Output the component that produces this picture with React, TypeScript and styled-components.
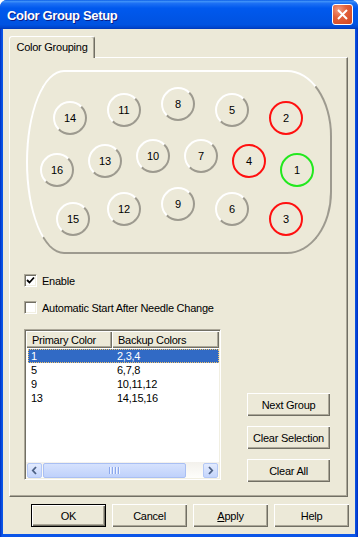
import React from "react";
import styled, { createGlobalStyle, css } from "styled-components";

const GlobalStyle = createGlobalStyle`
	html, body {
		margin: 0;
		padding: 0;
		background: #ffffff;
	}
	body {
		font-family: "Liberation Sans", Arial, sans-serif;
		font-size: 11px;
		letter-spacing: -0.25px;
		color: #000;
	}
`;

const Window = styled.div`
	width: 358px;
	height: 537px;
	display: flex;
	flex-direction: column;
	border-radius: 7px 7px 0 0;
	overflow: hidden;
	background: linear-gradient(to right, #0030c0 0, #0a55e8 2px, #0a55e8 355px, #0030c0 358px);
`;

const TitleBar = styled.div`
	height: 29px;
	flex: none;
	display: flex;
	align-items: center;
	justify-content: space-between;
	padding: 0 5px 0 7px;
	background: linear-gradient(
		to bottom,
		#0a5de6 0%,
		#3d90f8 5%,
		#1c70f4 12%,
		#0059ee 28%,
		#0055e6 60%,
		#0053e1 85%,
		#0047d0 94%,
		#0038b8 100%
	);
`;

const Title = styled.span`
	color: #fff;
	font-weight: bold;
	font-size: 13px;
	letter-spacing: -0.35px;
	text-shadow: 1px 1px #0c1c86;
	padding-top: 1px;
`;

const CloseButton = styled.div`
	width: 21px;
	height: 21px;
	box-sizing: border-box;
	border: 1px solid #fff;
	border-radius: 3px;
	display: flex;
	align-items: center;
	justify-content: center;
	background: radial-gradient(circle at 30% 25%, #f39b80 0%, #e2603a 40%, #cf4520 100%);
`;

const Body = styled.div`
	flex: 1;
	display: flex;
	flex-direction: column;
	margin: 0 3px 3px;
	padding: 7px 7px 7px 6px;
	background: #ece9d8;
`;

const TabStrip = styled.div`
	display: flex;
	position: relative;
	z-index: 1;
	margin-bottom: -1px;
`;

const Tab = styled.div`
	width: 86px;
	height: 22px;
	box-sizing: border-box;
	display: flex;
	align-items: center;
	justify-content: center;
	padding-bottom: 1px;
	background: #ece9d8;
	border-top: 1px solid #fff;
	border-left: 1px solid #fff;
	border-right: 1px solid #716f64;
	border-radius: 3px 3px 0 0;
	box-shadow: inset -1px 0 #aca899;
`;

const Panel = styled.div`
	height: 440px;
	box-sizing: border-box;
	display: flex;
	flex-direction: column;
	padding: 12px 17px 0 14px;
	border-top: 1px solid #fff;
	border-left: 1px solid #fff;
	border-right: 1px solid #716f64;
	border-bottom: 1px solid #716f64;
	box-shadow: inset -1px -1px #aca899;
`;

const Board = styled.div`
	position: relative;
	width: 306px;
	height: 184px;
	box-sizing: border-box;
	margin-left: 2px;
	border: 2px solid;
	border-color: #fff #9d9a8f #9d9a8f #fff;
	border-radius: 38px 45px 45px 38px / 92px 66px 62px 92px;
`;

const Needle = styled.div<{ $ring?: "red" | "green" }>`
	position: absolute;
	width: 34px;
	height: 34px;
	box-sizing: border-box;
	border-radius: 50%;
	display: flex;
	align-items: center;
	justify-content: center;
	font-size: 11px;
	letter-spacing: 0;
	border: 2px solid;
	border-color: #fff #9d9a8f #9d9a8f #fff;
	${(p) =>
		p.$ring === "red" &&
		css`
			border-color: #ff1010;
		`}
	${(p) =>
		p.$ring === "green" &&
		css`
			border-color: #22e81e;
		`}
`;

const CheckRow = styled.div<{ $gap: number }>`
	display: flex;
	align-items: center;
	gap: 5px;
	height: 13px;
	margin-top: ${(p) => p.$gap}px;
`;

const CheckBox = styled.div`
	width: 13px;
	height: 13px;
	box-sizing: border-box;
	border: 1px solid;
	border-color: #aca899 #fff #fff #aca899;
	box-shadow: inset 1px 1px #716f64, inset -1px -1px #f1efe2;
	background: #fff;
	display: flex;
	align-items: center;
	justify-content: center;
`;

const LowerArea = styled.div`
	display: flex;
	justify-content: space-between;
	align-items: flex-end;
	margin-top: 15px;
`;

const ListView = styled.div`
	width: 197px;
	height: 151px;
	box-sizing: border-box;
	margin-bottom: 2px;
	padding: 1px;
	display: flex;
	flex-direction: column;
	background: #fff;
	border: 1px solid;
	border-color: #aca899 #fff #fff #aca899;
	box-shadow: inset 1px 1px #716f64, inset -1px -1px #f1efe2;
`;

const Header = styled.div`
	display: flex;
	height: 17px;
	flex: none;
`;

const HeaderCell = styled.div<{ $width: number }>`
	width: ${(p) => p.$width}px;
	flex: none;
	box-sizing: border-box;
	display: flex;
	align-items: center;
	padding-left: 6px;
	background: #ece9d8;
	box-shadow: inset 1px 1px #fff, inset -1px -1px #716f64, inset -2px -2px #aca899;
`;

const Rows = styled.div`
	flex: 1;
	padding-top: 1px;
`;

const Row = styled.div<{ $selected?: boolean }>`
	display: flex;
	align-items: center;
	height: 14px;
	margin-left: 2px;
	${(p) =>
		p.$selected &&
		css`
			background: #316ac5;
			color: #fff;
			outline: 1px dotted #f2c46a;
			outline-offset: -1px;
		`}
`;

const Cell = styled.div<{ $width?: number }>`
	width: ${(p) => (p.$width ? `${p.$width}px` : "auto")};
	flex: none;
	padding-left: 3px;
	box-sizing: border-box;
`;

const ScrollBar = styled.div`
	height: 16px;
	flex: none;
	display: flex;
	align-items: center;
	padding: 0 1px;
	background: linear-gradient(to bottom, #f3f1ec, #fefefb);
`;

const ScrollButton = styled.div`
	width: 15px;
	height: 15px;
	box-sizing: border-box;
	flex: none;
	display: flex;
	align-items: center;
	justify-content: center;
	border: 1px solid #b4c8f6;
	border-radius: 2px;
	background: linear-gradient(to bottom, #e3ebfe, #c4d5fc);
`;

const Thumb = styled.div`
	width: 143px;
	height: 15px;
	box-sizing: border-box;
	flex: none;
	margin: 0 1px;
	display: flex;
	align-items: center;
	justify-content: center;
	gap: 1px;
	border: 1px solid #a9bff3;
	border-radius: 2px;
	background: linear-gradient(to bottom, #d6e2fd, #bfd1fb);
`;

const TrackSpace = styled.div`
	flex: 1;
`;

const Grip = styled.span`
	width: 1px;
	height: 7px;
	background: #8aa7ec;
	box-shadow: 1px 0 #eef3ff;
	margin-right: 1px;
`;

const SideButtons = styled.div`
	display: flex;
	flex-direction: column;
	gap: 10px;
`;

const PushButton = styled.div<{ $default?: boolean; $width: number }>`
	width: ${(p) => p.$width}px;
	height: 23px;
	box-sizing: border-box;
	display: flex;
	align-items: center;
	justify-content: center;
	background: #ece9d8;
	font-size: 11px;
	box-shadow: inset 1px 1px #fff, inset -1px -1px #716f64, inset -2px -2px #aca899;
	${(p) =>
		p.$default &&
		css`
			border: 1px solid #000;
		`}
`;

const DialogButtons = styled.div`
	display: flex;
	justify-content: flex-end;
	gap: 6px;
	margin-top: 7px;
	margin-right: -1px;
`;

const needles: { n: number; x: number; y: number; ring?: "red" | "green" }[] = [
	{ n: 1, x: 297, y: 170, ring: "green" },
	{ n: 2, x: 286, y: 118, ring: "red" },
	{ n: 3, x: 286, y: 219, ring: "red" },
	{ n: 4, x: 249, y: 161, ring: "red" },
	{ n: 5, x: 232, y: 110 },
	{ n: 6, x: 232, y: 209 },
	{ n: 7, x: 201, y: 156 },
	{ n: 8, x: 178, y: 104 },
	{ n: 9, x: 178, y: 204 },
	{ n: 10, x: 153, y: 156 },
	{ n: 11, x: 124, y: 110 },
	{ n: 12, x: 124, y: 209 },
	{ n: 13, x: 105, y: 161 },
	{ n: 14, x: 70, y: 118 },
	{ n: 15, x: 73, y: 219 },
	{ n: 16, x: 57, y: 170 },
];

const groups = [
	{ primary: "1", backup: "2,3,4" },
	{ primary: "5", backup: "6,7,8" },
	{ primary: "9", backup: "10,11,12" },
	{ primary: "13", backup: "14,15,16" },
];

const Check = () => (
	<svg width="9" height="9" viewBox="0 0 9 9">
		<path d="M1 4 L3.5 6.5 L8 1.5" fill="none" stroke="#000" strokeWidth="1.8" />
	</svg>
);

const Arrow = ({ dir }: { dir: "left" | "right" }) => (
	<svg width="7" height="9" viewBox="0 0 7 9">
		<path
			d={dir === "left" ? "M5 1 L1.8 4.5 L5 8" : "M2 1 L5.2 4.5 L2 8"}
			fill="none"
			stroke="#4d6185"
			strokeWidth="1.8"
		/>
	</svg>
);

export default function App() {
	return (
		<>
			<GlobalStyle />
			<Window>
				<TitleBar>
					<Title>Color Group Setup</Title>
					<CloseButton>
						<svg width="19" height="19" viewBox="0 0 19 19">
							<path d="M5 5 L14 14 M14 5 L5 14" stroke="#fff" strokeWidth="2" />
						</svg>
					</CloseButton>
				</TitleBar>
				<Body>
					<TabStrip>
						<Tab>Color Grouping</Tab>
					</TabStrip>
					<Panel>
						<Board>
							{needles.map((d) => (
								<Needle
									key={d.n}
									$ring={d.ring}
									style={{ left: d.x - 45, top: d.y - 89 }}>
									{d.n}
								</Needle>
							))}
						</Board>
						<CheckRow $gap={20}>
							<CheckBox>
								<Check />
							</CheckBox>
							<span>Enable</span>
						</CheckRow>
						<CheckRow $gap={14}>
							<CheckBox />
							<span>Automatic Start After Needle Change</span>
						</CheckRow>
						<LowerArea>
							<ListView>
								<Header>
									<HeaderCell $width={86}>Primary Color</HeaderCell>
									<HeaderCell $width={107}>Backup Colors</HeaderCell>
								</Header>
								<Rows>
									{groups.map((g, i) => (
										<Row key={g.primary} $selected={i === 0}>
											<Cell $width={86}>{g.primary}</Cell>
											<Cell>{g.backup}</Cell>
										</Row>
									))}
								</Rows>
								<ScrollBar>
									<ScrollButton>
										<Arrow dir="left" />
									</ScrollButton>
									<Thumb>
										<Grip />
										<Grip />
										<Grip />
										<Grip />
									</Thumb>
									<TrackSpace />
									<ScrollButton>
										<Arrow dir="right" />
									</ScrollButton>
								</ScrollBar>
							</ListView>
							<SideButtons>
								<PushButton $width={83}>Next Group</PushButton>
								<PushButton $width={83}>Clear Selection</PushButton>
								<PushButton $width={83}>Clear All</PushButton>
							</SideButtons>
						</LowerArea>
					</Panel>
					<DialogButtons>
						<PushButton $width={75} $default>
							OK
						</PushButton>
						<PushButton $width={75}>Cancel</PushButton>
						<PushButton $width={75}>
							<span>
								<u>A</u>pply
							</span>
						</PushButton>
						<PushButton $width={75}>Help</PushButton>
					</DialogButtons>
				</Body>
			</Window>
		</>
	);
}
